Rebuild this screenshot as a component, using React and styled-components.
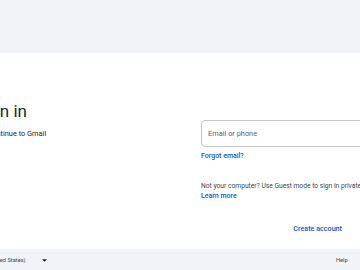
import styled, { createGlobalStyle } from 'styled-components';

const GlobalStyle = createGlobalStyle`
  html, body {
    margin: 0;
    padding: 0;
    overflow: hidden;
    background: #ffffff;
  }
  body {
    font-family: Roboto, "Liberation Sans", Arial, sans-serif;
    color: #1f1f1f;
  }
`;

// the screenshot is a crop of a wider page, so the shell starts left of the window
const Shell = styled.div`
  display: flex;
  flex-direction: column;
  width: 446px;
  height: 100vh;
  margin-left: -32px;
`;

const TopBand = styled.header`
  height: 53px;
  flex-shrink: 0;
  background: #f0f4f9;
`;

const Main = styled.main`
  flex: 1;
  display: flex;
  align-items: flex-start;
  padding-left: 12px;
  background: #ffffff;
`;

const Intro = styled.section`
  width: 221px;
  flex-shrink: 0;
  padding-top: 48px;
`;

const Title = styled.h1`
  margin: 0 0 0 -4px;
  font-size: 17px;
  line-height: 20px;
  font-weight: 400;
  color: #1f1f1f;
`;

const Subtitle = styled.p`
  margin: 7.5px 0 0;
  font-size: 7.4px;
  line-height: 10px;
  color: #1f1f1f;
`;

const Form = styled.form`
  width: 200px;
  flex-shrink: 0;
  padding-top: 67px;
  display: flex;
  flex-direction: column;
  align-items: flex-start;
`;

const Field = styled.input`
  box-sizing: border-box;
  width: 100%;
  height: 27px;
  margin: 0;
  border: 1px solid #c4c7c5;
  border-radius: 4px;
  padding: 0 6px;
  font-family: Roboto, "Liberation Sans", Arial, sans-serif;
  font-size: 7.4px;
  color: #1f1f1f;
  background: #ffffff;
  outline: none;
  &::placeholder {
    color: #5f6368;
  }
`;

const TextLink = styled.a`
  display: block;
  margin-top: ${(props) => props.$top || 0}px;
  font-size: 7px;
  line-height: 10px;
  font-weight: 500;
  color: #0b57d0;
  text-decoration: none;
  cursor: pointer;
`;

const Hint = styled.p`
  margin: 21px 0 0;
  font-size: 6.7px;
  line-height: 9.4px;
  color: #444746;
  white-space: nowrap;
`;

const Actions = styled.div`
  width: 100%;
  display: flex;
  justify-content: flex-end;
  align-items: center;
  gap: 12px;
  margin-top: 17px;
`;

const Button = styled.button`
  height: 20px;
  padding: 0 ${(props) => (props.$primary ? 13 : 6)}px;
  border: none;
  border-radius: 10px;
  background: ${(props) => (props.$primary ? '#0b57d0' : 'transparent')};
  color: ${(props) => (props.$primary ? '#ffffff' : '#0b57d0')};
  font-family: Roboto, "Liberation Sans", Arial, sans-serif;
  font-size: 7.2px;
  font-weight: 500;
  cursor: pointer;
`;

const Footer = styled.footer`
  height: 21px;
  flex-shrink: 0;
  display: flex;
  align-items: center;
  justify-content: space-between;
  padding-top: 1px;
  box-sizing: border-box;
  background: #f0f4f9;
  font-size: 5.7px;
  color: #444746;
`;

const LangSelect = styled.div`
  display: flex;
  align-items: center;
  gap: 16px;
`;

const FooterLinks = styled.nav`
  display: flex;
  gap: 16px;
  a {
    color: #444746;
    text-decoration: none;
  }
`;

export default function App() {
  return (
    <>
      <GlobalStyle />
      <Shell>
        <TopBand />
        <Main>
          <Intro>
            <Title>Sign in</Title>
            <Subtitle>to continue to Gmail</Subtitle>
          </Intro>
          <Form onSubmit={(e) => e.preventDefault()}>
            <Field type="email" placeholder="Email or phone" />
            <TextLink $top={4}>Forgot email?</TextLink>
            <Hint>Not your computer? Use Guest mode to sign in privately.</Hint>
            <TextLink>Learn more</TextLink>
            <Actions>
              <Button type="button">Create account</Button>
              <Button type="submit" $primary>
                Next
              </Button>
            </Actions>
          </Form>
        </Main>
        <Footer>
          <LangSelect>
            <span>English (United States)</span>
            <svg width="5" height="3" viewBox="0 0 10 5">
              <path d="M0 0l5 5 5-5z" fill="#1f1f1f" />
            </svg>
          </LangSelect>
          <FooterLinks>
            <a>Help</a>
            <a>Privacy</a>
            <a>Terms</a>
          </FooterLinks>
        </Footer>
      </Shell>
    </>
  );
}
